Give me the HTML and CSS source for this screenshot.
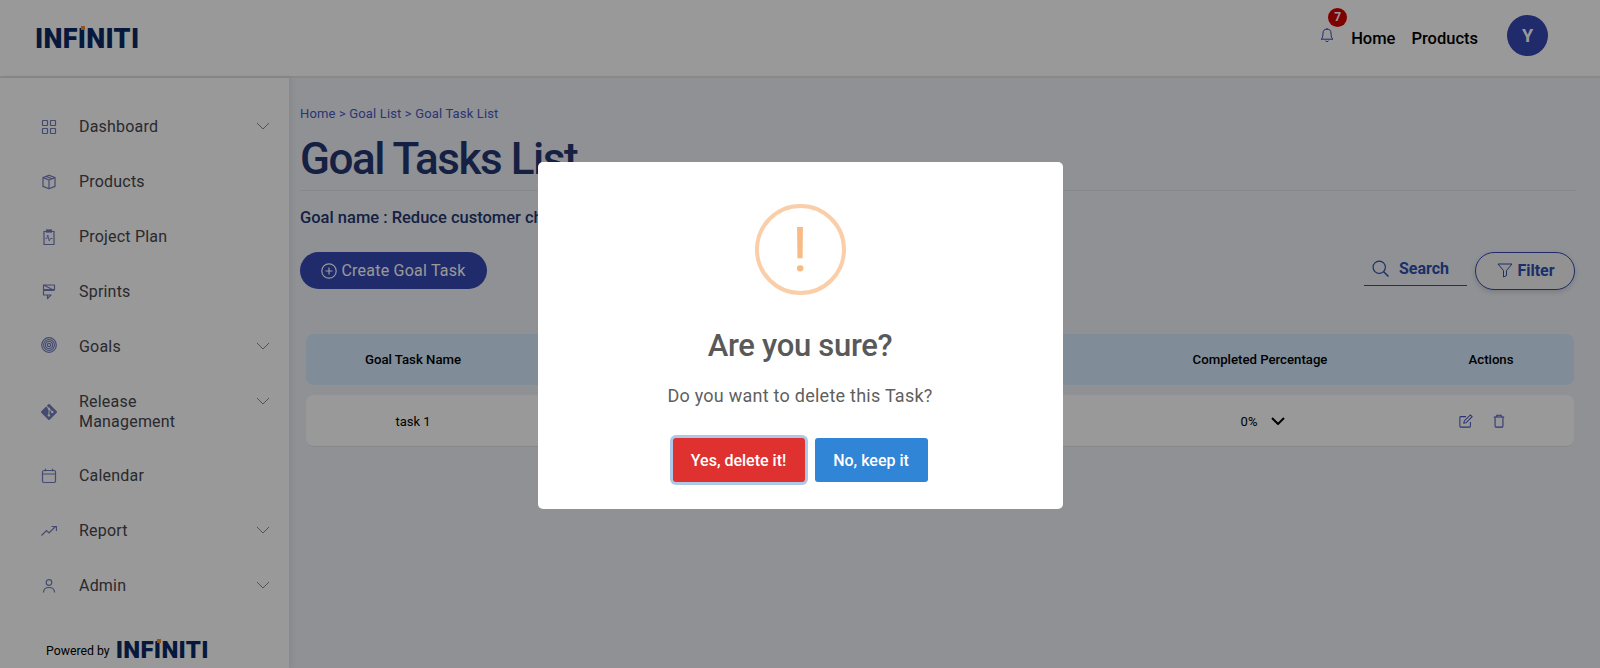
FILE: index.html
```html
<!DOCTYPE html>
<html>
<head>
    <title>Goal Tasks List</title>
    <meta name="viewport" content="width=device-width, initial-scale=1">
    <link rel="stylesheet" href="styles.css">
</head>
<body>
    <header class="topbar">
        <div class="logo">INF<span class="logo-i">I</span>NITI</div>
        <div class="topbar-right">
            <div class="bell">
                <svg viewBox="0 0 16 16" width="16" height="16" fill="none" stroke="#3448b2" stroke-width="1"><path d="M8 2.2a4 4 0 0 0-4 4c0 1.2-.2 3.4-.7 4.6-.2.5-.7 1-1.3 1.4h12c-.6-.4-1.100-.9-1.300-1.400-.5-1.200-.7-3.400-.7-4.600a4 4 0 0 0-4-4z"/><path d="M8 2.200V1M6.500 13.600a1.600 1.600 0 0 0 3 0"/></svg>
                <span class="bell-count">7</span>
            </div>
            <a class="top-link">Home</a>
            <a class="top-link">Products</a>
            <div class="avatar">Y</div>
        </div>
    </header>

    <div class="layout">
        <aside class="sidebar">
            <nav class="nav">
                <div class="nav-item">
                    <svg class="nav-icon" viewBox="0 0 16 16" fill="none" stroke="currentColor"><rect x="1.500" y="1.500" width="5" height="5" rx=".5"/><rect x="9.500" y="1.500" width="5" height="5" rx=".5"/><rect x="1.500" y="9.500" width="5" height="5" rx=".5"/><rect x="9.500" y="9.500" width="5" height="5" rx=".5"/></svg>
                    <span class="nav-label">Dashboard</span>
                    <svg class="nav-chevron" viewBox="0 0 14 8" fill="none" stroke="currentColor"><path d="M1 1l6 6 6-6"/></svg>
                </div>
                <div class="nav-item">
                    <svg class="nav-icon" viewBox="0 0 16 16" fill="none" stroke="currentColor" stroke-linejoin="round"><path d="M8 1.200l6 2.400v8.800l-6 2.400-6-2.400V3.600z"/><path d="M2 3.600l6 2.400 6-2.400M8 6v8.800M5 2.400l6 2.400"/></svg>
                    <span class="nav-label">Products</span>
                </div>
                <div class="nav-item">
                    <svg class="nav-icon" viewBox="0 0 16 16" fill="none" stroke="currentColor"><path d="M5.500 2.500h-2.500v13h10v-13h-2.500"/><rect x="5.500" y="1" width="5" height="2" fill="currentColor"/><path d="M4.500 9.500h1.300l1-3.500 1.400 6 1.100-2.500h2.200" stroke-width=".9"/></svg>
                    <span class="nav-label">Project Plan</span>
                </div>
                <div class="nav-item">
                    <svg class="nav-icon" viewBox="0 0 16 16" fill="none" stroke="currentColor" stroke-width="1.400" stroke-linejoin="round"><path d="M2.500 1h11v4.500h-11zM13.500 6.500h-11v4.500h7.500l-3.500 3.500v-3.500M2.500 1l9 4.500"/></svg>
                    <span class="nav-label">Sprints</span>
                </div>
                <div class="nav-item">
                    <svg class="nav-icon" viewBox="0 0 16 16" fill="none" stroke="currentColor" stroke-width=".9"><circle cx="8" cy="8" r="7.300"/><circle cx="8" cy="8" r="5.400"/><circle cx="8" cy="8" r="3.500"/><circle cx="8" cy="8" r="1.600"/></svg>
                    <span class="nav-label">Goals</span>
                    <svg class="nav-chevron" viewBox="0 0 14 8" fill="none" stroke="currentColor"><path d="M1 1l6 6 6-6"/></svg>
                </div>
                <div class="nav-item nav-item-tall">
                    <svg class="nav-icon" viewBox="0 0 16 16"><path fill="currentColor" d="M15.700 7.300 8.700.3a1 1 0 0 0-1.400 0L5.800 1.800l1.800 1.800a1.200 1.200 0 0 1 1.500 1.500l1.800 1.800a1.200 1.200 0 1 1-.7.7L8.500 6v4.400a1.200 1.200 0 1 1-1-.1V5.900a1.200 1.200 0 0 1-.6-1.600L5.100 2.500.3 7.300a1 1 0 0 0 0 1.400l7 7a1 1 0 0 0 1.400 0l7-7a1 1 0 0 0 0-1.400z"/></svg>
                    <span class="nav-label">Release<br>Management</span>
                    <svg class="nav-chevron" viewBox="0 0 14 8" fill="none" stroke="currentColor"><path d="M1 1l6 6 6-6"/></svg>
                </div>
                <div class="nav-item">
                    <svg class="nav-icon" viewBox="0 0 16 16" fill="none" stroke="currentColor"><rect x="1.500" y="2.500" width="13" height="12" rx="1.500"/><path d="M1.500 6h13M4.500 .8v2.500M11.500 .8v2.500"/></svg>
                    <span class="nav-label">Calendar</span>
                </div>
                <div class="nav-item">
                    <svg class="nav-icon" viewBox="0 0 16 16" fill="none" stroke="currentColor"><path d="M.5 12.500l5-5 2.500 2.500 6.500-6.500M10.500 3.500h5v4.500"/></svg>
                    <span class="nav-label">Report</span>
                    <svg class="nav-chevron" viewBox="0 0 14 8" fill="none" stroke="currentColor"><path d="M1 1l6 6 6-6"/></svg>
                </div>
                <div class="nav-item">
                    <svg class="nav-icon" viewBox="0 0 16 16" fill="none" stroke="currentColor"><circle cx="8" cy="4.500" r="2.800"/><path d="M2.500 14.500c0-3 2-5 5.500-5s5.500 2 5.500 5"/></svg>
                    <span class="nav-label">Admin</span>
                    <svg class="nav-chevron" viewBox="0 0 14 8" fill="none" stroke="currentColor"><path d="M1 1l6 6 6-6"/></svg>
                </div>
            </nav>
            <div class="powered">
                <span>Powered by</span>
                <div class="logo logo-small">INF<span class="logo-i">I</span>NITI</div>
            </div>
        </aside>

        <main class="content">
            <div class="breadcrumb">Home &gt; Goal List &gt; Goal Task List</div>
            <h1 class="page-title">Goal Tasks List</h1>
            <div class="goal-name">Goal name : Reduce customer churn</div>

            <div class="toolbar">
                <button class="create-btn">
                    <svg viewBox="0 0 16 16" width="16" height="16" fill="none" stroke="#fff" stroke-width="1.200"><circle cx="8" cy="8" r="7.200"/><path d="M8 4.500v7M4.500 8h7"/></svg>
                    Create Goal Task
                </button>
                <div class="toolbar-right">
                    <div class="search">
                        <svg viewBox="0 0 16 16" width="17" height="17" fill="none" stroke="#2d4fb0" stroke-width="1.100"><circle cx="6.800" cy="6.800" r="5.800"/><path d="M11 11l4.500 4.500" stroke-width="1.400"/></svg>
                        <span>Search</span>
                    </div>
                    <button class="filter-btn">
                        <svg viewBox="0 0 16 16" width="16" height="16" fill="none" stroke="#2d4fb0" stroke-linejoin="round"><path d="M1 2h14l-5.500 6.500v5l-3 1.500V8.500z"/></svg>
                        Filter
                    </button>
                </div>
            </div>

            <div class="table-row table-head">
                <div>Goal Task Name</div>
                <div></div>
                <div>Completed Percentage</div>
                <div>Actions</div>
            </div>
            <div class="table-row table-body">
                <div>task 1</div>
                <div></div>
                <div class="percent">
                    <span>0%</span>
                    <svg viewBox="0 0 14 8" width="14" height="8" fill="none" stroke="#000" stroke-width="2"><path d="M1 1l6 6 6-6"/></svg>
                </div>
                <div class="row-actions">
                    <svg viewBox="0 0 16 16" width="14" height="14" fill="none" stroke="#4a58c0" stroke-width="1.200"><path d="M13 9v5a1 1 0 0 1-1 1H2a1 1 0 0 1-1-1V4a1 1 0 0 1 1-1h6"/><path d="M6 8l-.5 2.500L8 10l7-7-2-2z"/></svg>
                    <svg viewBox="0 0 16 16" width="14" height="14" fill="none" stroke="#4a58c0" stroke-width="1.200"><path d="M2 3.500h12M3.500 3.500v10.500a1 1 0 0 0 1 1h7a1 1 0 0 0 1-1V3.500M5.500 3.500V1.500h5v2"/></svg>
                </div>
            </div>
        </main>
    </div>

    <div class="overlay">
        <div class="modal">
            <div class="warn-icon">!</div>
            <h2 class="modal-title">Are you sure?</h2>
            <div class="modal-text">Do you want to delete this Task?</div>
            <div class="modal-actions">
                <button class="modal-btn btn-confirm">Yes, delete it!</button>
                <button class="modal-btn btn-cancel">No, keep it</button>
            </div>
        </div>
    </div>
</body>
</html>
```

FILE: styles.css
```css
html, body { margin: 0; height: 668px; overflow: hidden; }
body { font-family: Roboto, "Liberation Sans", sans-serif; background: #eef2f8; color: #000; }

.topbar {
    height: 76px;
    background: #fff;
    border-bottom: 2px solid #e4e4e4;
    display: flex;
    align-items: center;
    justify-content: space-between;
    padding: 0 52px 0 35px;
    box-sizing: content-box;
}
.logo {
    font-family: Roboto, sans-serif;
    font-weight: 900;
    font-size: 27px;
    line-height: 28px;
    letter-spacing: .3px;
    color: #0a2a66;
}
.topbar > .logo { margin-top: 2px; }
.logo-i { position: relative; }
.logo-i::before {
    content: "";
    position: absolute;
    left: 3px;
    top: 3px;
    width: 4px;
    height: 4px;
    background: #f08a30;
}
.logo-small { font-size: 24px; line-height: 25px; letter-spacing: .3px; }

.topbar-right { display: flex; align-items: center; }
.bell { position: relative; width: 16px; height: 16px; margin-right: 16px; margin-top: -6px; }
.bell svg { display: block; }
.bell-count {
    position: absolute;
    left: 9px;
    top: -19px;
    width: 19px;
    height: 19px;
    border-radius: 50%;
    background: #d40000;
    color: #fff;
    font-size: 12px;
    font-weight: 700;
    line-height: 18px;
    text-align: center;
}
.top-link { font-size: 16.5px; font-weight: 500; margin-right: 16px; }
.avatar {
    width: 41px;
    height: 41px;
    border-radius: 50%;
    background: #3448b2;
    color: #fff;
    font-size: 18px;
    font-weight: 700;
    line-height: 41px;
    text-align: center;
    margin-left: 13px;
    margin-top: -6px;
}

.layout { display: flex; height: 590px; }
.sidebar {
    width: 289px;
    flex-shrink: 0;
    background: #fff;
    box-shadow: 2px 0 6px rgba(0,0,0,.08);
    padding-top: 21px;
    box-sizing: border-box;
}
.nav-item {
    display: flex;
    align-items: flex-start;
    padding: 17.5px 19px 17.5px 41px;
    color: #46464e;
    font-size: 16px;
    line-height: 20px;
    letter-spacing: .2px;
}
.nav-item-tall { padding-bottom: 16.5px; }
.nav-icon { width: 16px; height: 16px; color: #737cbd; stroke-width: 1.200; flex-shrink: 0; margin-top: 2px; }
.nav-item:nth-child(5) .nav-icon { margin-top: 0; }
.nav-item-tall .nav-icon { margin-top: 12px; }
.nav-label { margin-left: 22px; flex: 1; }
.nav-chevron { width: 14px; height: 8px; color: #8a8a8a; margin-top: 5px; }

.powered {
    display: flex;
    align-items: center;
    gap: 6px;
    margin: 25px 0 0 46px;
    font-size: 12.300px;
}

.content { flex: 1; padding: 26px 24px 0 11px; min-width: 0; }
.breadcrumb { font-size: 13px; line-height: 20px; color: #4a58c0; letter-spacing: .15px; }
.page-title {
    margin: 9px 0 0;
    padding-bottom: 5px;
    border-bottom: 1px solid #dfe3ea;
    font-size: 44px;
    font-weight: 500;
    line-height: 52px;
    letter-spacing: -1.450px;
    color: #243670;
}
.goal-name { margin-top: 16px; font-size: 16.5px; line-height: 22px; font-weight: 500; color: #243670; }

.toolbar { display: flex; justify-content: space-between; align-items: flex-start; margin-top: 23px; }
.create-btn {
    width: 187px;
    height: 37px;
    border: none;
    border-radius: 19px;
    background: #3448b2;
    color: #fff;
    font-family: inherit;
    font-size: 16px;
    letter-spacing: .22px;
    display: flex;
    align-items: center;
    justify-content: center;
    gap: 4px;
    padding: 0;
}
.toolbar-right { display: flex; align-items: flex-start; gap: 8px; margin-right: 1px; }
.search {
    width: 103px;
    height: 34px;
    border-bottom: 1px solid #2d4fb0;
    display: flex;
    align-items: center;
    gap: 10px;
    padding-left: 8px;
    box-sizing: border-box;
    color: #2d4fb0;
    font-weight: 700;
    font-size: 16px;
}
.filter-btn {
    width: 100px;
    height: 38px;
    border: 1px solid #3448b2;
    border-radius: 19px;
    background: #f4f4f6;
    box-shadow: 0 2px 5px rgba(0,0,0,.15);
    color: #2d4fb0;
    font-family: inherit;
    font-size: 16px;
    font-weight: 700;
    display: flex;
    align-items: center;
    justify-content: center;
    gap: 4px;
    padding: 0 0 2px 2px;
}

.table-row {
    display: grid;
    grid-template-columns: 214px 592px 296px 166px;
    align-items: center;
    text-align: center;
    margin-left: 6px;
    margin-right: 2px;
    border-radius: 8px;
}
.table-head { margin-top: 44px; height: 51px; background: #d5e9fd; font-size: 13.200px; font-weight: 500; }
.table-body { margin-top: 10px; height: 52px; padding-top: 1px; background: #fff; border-bottom: 1px solid #dfe3ea; box-sizing: border-box; font-size: 13px; }
.percent { display: flex; align-items: center; justify-content: center; gap: 14px; padding-left: 6px; box-sizing: border-box; }
.row-actions { display: flex; align-items: center; justify-content: center; gap: 19px; padding-right: 17px; box-sizing: border-box; }

.overlay {
    position: fixed;
    top: 0;
    left: 0;
    right: 0;
    bottom: 0;
    background: rgba(0,0,0,.4);
    display: flex;
    align-items: center;
    justify-content: center;
}
.modal {
    width: 525px;
    height: 347px;
    background: #fff;
    border-radius: 5px;
    box-sizing: border-box;
    padding-top: 42px;
    display: flex;
    flex-direction: column;
    align-items: center;
    margin-top: 3px;
}
.warn-icon {
    width: 91px;
    height: 91px;
    border: 4px solid #facea8;
    border-radius: 50%;
    box-sizing: border-box;
    color: #f8bb86;
    font-size: 62px;
    font-weight: 400;
    line-height: 83px;
    text-align: center;
}
.modal-title { margin: 29px 0 0; font-size: 31px; font-weight: 500; line-height: 44px; letter-spacing: -.3px; color: #595959; }
.modal-text { margin-top: 16px; font-size: 18px; line-height: 24px; color: #5f5f5f; letter-spacing: .25px; }
.modal-actions { display: flex; gap: 10px; margin-top: 30px; }
.modal-btn {
    height: 44px;
    border: none;
    border-radius: 3px;
    color: #fff;
    font-family: inherit;
    font-size: 16px;
    font-weight: 500;
}
.btn-confirm { width: 132px; background: #e03131; box-shadow: 0 0 0 3px rgba(50,120,200,.4); }
.btn-cancel { width: 113px; background: #3085d6; }
```
